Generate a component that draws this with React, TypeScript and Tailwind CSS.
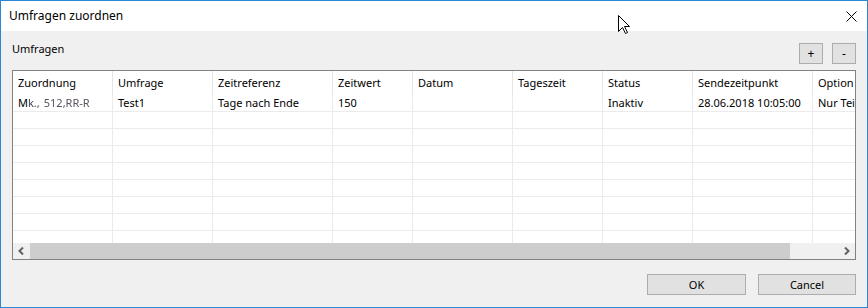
import React from "react";

const cols = [
  { name: "Zuordnung", w: "w-[100px]" },
  { name: "Umfrage", w: "w-[100px]" },
  { name: "Zeitreferenz", w: "w-[120px]" },
  { name: "Zeitwert", w: "w-[80px]" },
  { name: "Datum", w: "w-[100px]" },
  { name: "Tageszeit", w: "w-[90px]" },
  { name: "Status", w: "w-[90px]" },
  { name: "Sendezeitpunkt", w: "w-[120px]" },
  { name: "Option", w: "w-[120px]" },
];

const row1: React.ReactNode[] = [
  <span key="a" className="flex items-center">
    <span>M</span>
    <span className="inline-block text-[#444] blur-[0.4px]">k</span>
    <span className="text-[#555]">.,</span>
    <span className="inline-block ml-[4px] text-[#5a5060] blur-[0.7px]">512,RR-R</span>
  </span>,
  "Test1",
  "Tage nach Ende",
  "150",
  "",
  "",
  "Inaktiv",
  "28.06.2018 10:05:00",
  "Nur Teilnehmer",
];

export default function App() {
  const font = { fontFamily: '"Noto Sans", "Open Sans", sans-serif' };
  return (
    <div
      className="relative w-[868px] h-[308px] border border-[#2b87d3] flex flex-col text-black overflow-hidden"
      style={font}
    >
      {/* title bar */}
      <div className="h-[30px] bg-white flex items-center justify-between pl-[8px] pr-[10px]">
        <span className="text-[12px] leading-none">Umfragen zuordnen</span>
        <svg width="11" height="11" viewBox="0 0 11 11" className="mt-[1px]">
          <path d="M0.5 0.5 L10.5 10.5 M10.5 0.5 L0.5 10.5" stroke="#000" strokeWidth="1" />
        </svg>
      </div>

      {/* body */}
      <div className="flex-1 bg-[#f0f0f0] flex flex-col px-[11px] pt-[12px]">
        <div className="h-[21px] flex items-start justify-between">
          <span className="text-[11px] leading-[14px] mt-[-1px]">Umfragen</span>
          <div className="flex gap-[9px]">
            <button className="w-[24px] h-[21px] bg-[#e1e1e1] border border-[#adadad] text-[12px] leading-none flex items-center justify-center">
              +
            </button>
            <button className="w-[24px] h-[21px] bg-[#e1e1e1] border border-[#adadad] text-[12px] leading-none flex items-center justify-center">
              -
            </button>
          </div>
        </div>

        {/* table */}
        <div className="mt-[6px] h-[190px] border border-[#828282] bg-white flex flex-col overflow-hidden">
          <div className="flex-1 overflow-hidden">
            <div className="flex h-[24px] w-[920px]">
              {cols.map((c) => (
                <div
                  key={c.name}
                  className={`${c.w} shrink-0 border-r border-[#e5e5e5] text-[11px] pl-[5px] flex items-center whitespace-nowrap`}
                >
                  {c.name}
                </div>
              ))}
            </div>
            {Array.from({ length: 9 }).map((_, r) => (
              <div key={r} className="flex h-[17px] w-[920px] border-b border-[#ebebeb]">
                {cols.map((c, i) => (
                  <div
                    key={c.name}
                    className={`${c.w} shrink-0 border-r border-[#ebebeb] text-[11px] pl-[5px] flex items-center whitespace-nowrap overflow-hidden`}
                  >
                    {r === 0 ? row1[i] : ""}
                  </div>
                ))}
              </div>
            ))}
          </div>
          {/* horizontal scrollbar */}
          <div className="h-[16px] shrink-0 bg-[#f0f0f0] flex items-stretch">
            <div className="w-[17px] flex items-center justify-center">
              <svg width="7" height="8" viewBox="0 0 7 8">
                <path d="M5 0.5 L1.5 4 L5 7.5" stroke="#606060" strokeWidth="2" fill="none" />
              </svg>
            </div>
            <div className="flex-1 flex">
              <div className="w-[760px] bg-[#cdcdcd]" />
            </div>
            <div className="w-[17px] flex items-center justify-center">
              <svg width="7" height="8" viewBox="0 0 7 8">
                <path d="M2 0.5 L5.5 4 L2 7.5" stroke="#606060" strokeWidth="2" fill="none" />
              </svg>
            </div>
          </div>
        </div>

        {/* bottom buttons */}
        <div className="mt-[14px] flex justify-end gap-[12px]">
          <button className="w-[99px] h-[21px] bg-[#e1e1e1] border border-[#adadad] text-[11px] leading-none flex items-center justify-center">
            OK
          </button>
          <button className="w-[98px] h-[21px] bg-[#e1e1e1] border border-[#adadad] text-[11px] leading-none flex items-center justify-center">
            Cancel
          </button>
        </div>
      </div>

      {/* mouse cursor */}
      <svg
        width="13"
        height="20"
        viewBox="0 0 13 20"
        className="absolute left-[617px] top-[14px]"
      >
        <path
          d="M0.5 0.5 L0.5 16.5 L4.5 12.5 L7.5 18.5 L9.5 17.5 L6.5 11.5 L11.5 11.5 Z"
          fill="#fff"
          stroke="#000"
          strokeWidth="1"
          strokeLinejoin="miter"
        />
      </svg>
    </div>
  );
}
